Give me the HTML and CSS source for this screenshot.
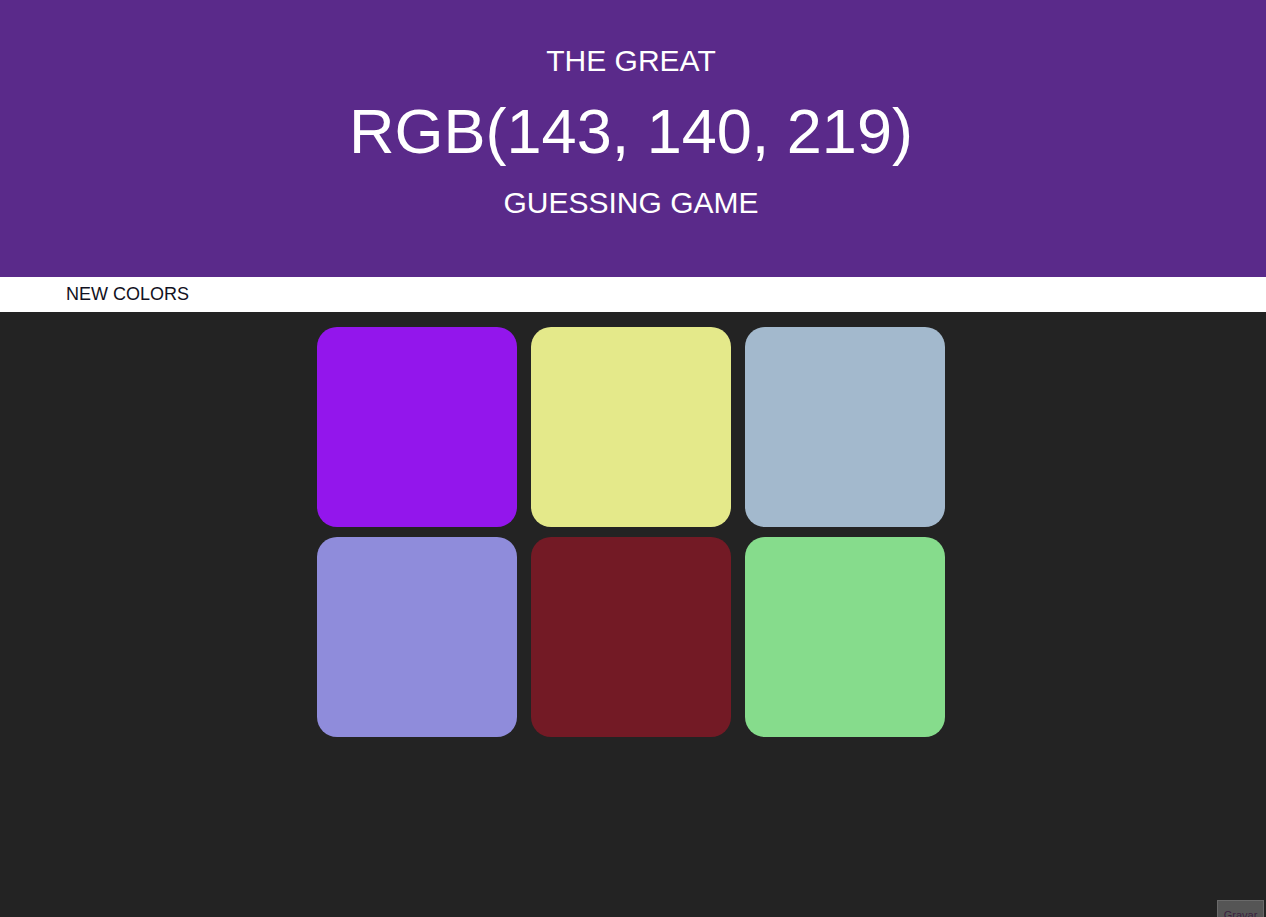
FILE: index.html
```html
<!DOCTYPE html>
<html lang="en">
<head>
<meta charset="utf-8">
<title>The Great RGB Guessing Game</title>
<link rel="stylesheet" href="styles.css">
</head>
<body>
<header class="header">
  <div class="title-small">THE GREAT</div>
  <div class="title-rgb">RGB(143, 140, 219)</div>
  <div class="title-small title-last">GUESSING GAME</div>
</header>
<nav class="stripe">
  <button class="new-colors">NEW COLORS</button>
</nav>
<main class="board">
  <div class="square sq-purple"></div>
  <div class="square sq-yellow"></div>
  <div class="square sq-steel"></div>
  <div class="square sq-lavender"></div>
  <div class="square sq-maroon"></div>
  <div class="square sq-green"></div>
</main>
<button class="record">Gravar</button>
</body>
</html>
```

FILE: styles.css
```css
html, body {
  margin: 0;
  padding: 0;
}
body {
  background: #232323;
  font-family: "Liberation Sans", Arial, sans-serif;
  min-height: 917px;
  overflow: hidden;
}
.header {
  background: #5a2a8a;
  color: #ffffff;
  text-align: center;
  padding: 44px 4px 57px 0;
  height: 176px;
}
.title-small {
  font-size: 30px;
  line-height: 34px;
}
.title-rgb {
  font-size: 63px;
  line-height: 72px;
  margin-top: 17px;
  margin-bottom: 19px;
}
.stripe {
  background: #ffffff;
  height: 35px;
  padding-left: 66px;
}
.new-colors {
  background: none;
  border: none;
  padding: 0 0 2px 0;
  margin: 0;
  font-family: "Liberation Sans", Arial, sans-serif;
  font-size: 18px;
  line-height: 32px;
  height: 35px;
  color: #111122;
}
.board {
  display: grid;
  grid-template-columns: repeat(3, 200px);
  column-gap: 14px;
  row-gap: 10px;
  width: 628px;
  margin: 15px 0 0 calc(50% - 316px);
}
.square {
  width: 200px;
  height: 200px;
  border-radius: 20px;
}
.sq-purple { background: #9316ec; }
.sq-yellow { background: #e4e98a; }
.sq-steel { background: #a3b9cd; }
.sq-lavender { background: #8f8cdb; }
.sq-maroon { background: #731a25; }
.sq-green { background: #86dc8c; }
.record {
  position: fixed;
  top: 900px;
  left: 1217px;
  width: 47px;
  height: 24px;
  background: #555555;
  border: 1px solid #6a6a6a;
  color: #3a1f3e;
  font-family: "Liberation Sans", Arial, sans-serif;
  font-size: 11px;
  padding: 6px 0 0 0;
  text-align: center;
  line-height: 12px;
}
```
